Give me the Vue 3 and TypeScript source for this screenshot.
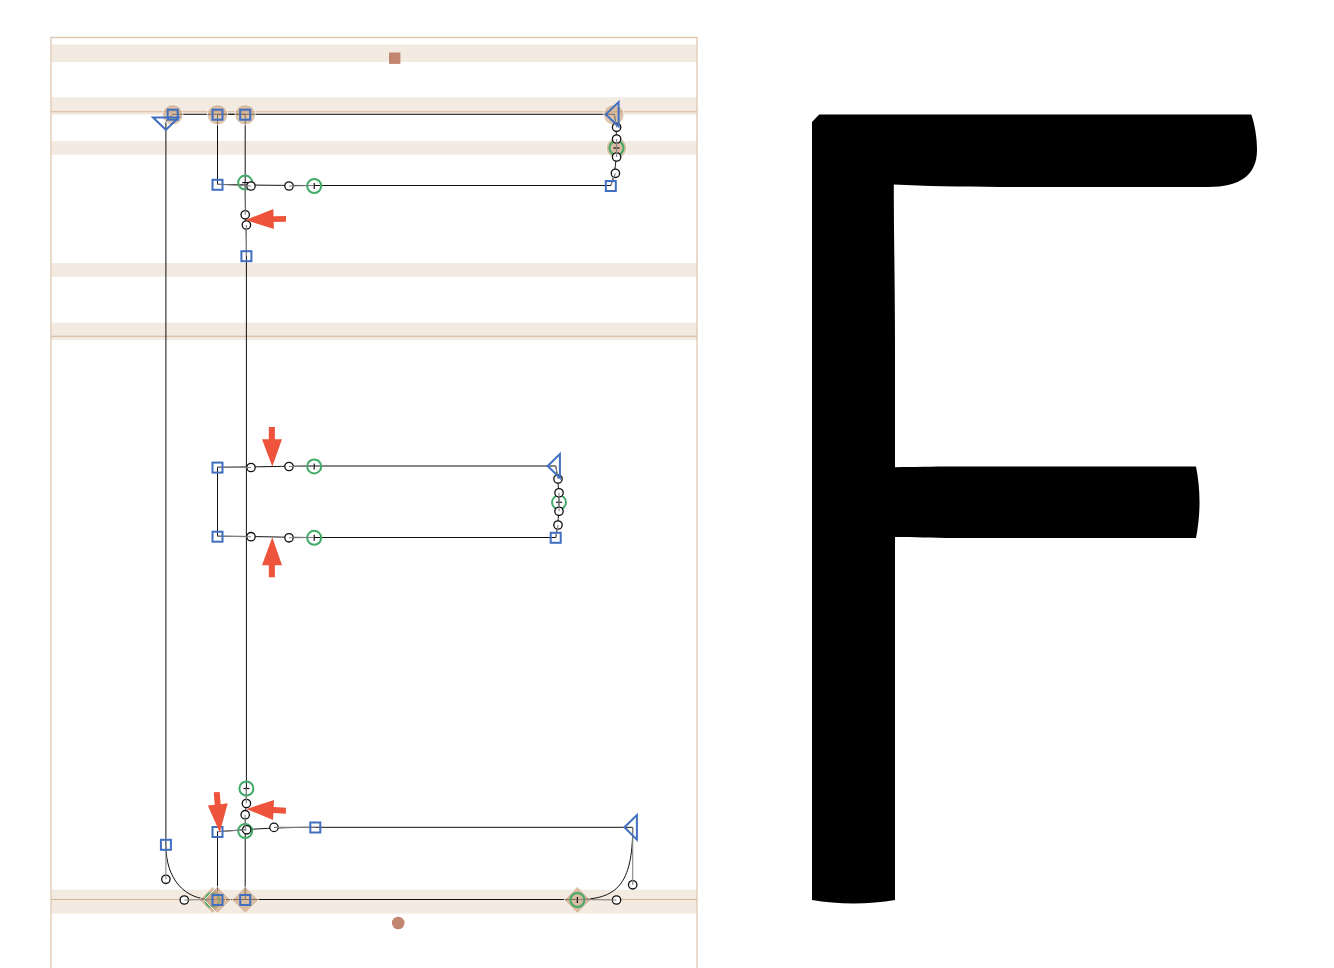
<script setup lang="ts">
type Point = [number, number]
type Segment = [number, number, number, number]
interface Extremum {
  x: number
  y: number
  tick: 'h' | 'v'
}

const zones: Point[] = [
  [44.5, 17.5],
  [97.3, 17.4],
  [141, 13.7],
  [263, 13.7],
  [322.6, 17.4],
  [889.8, 23.8],
]

const metrics: number[] = [111.8, 336.2, 899.5]

const contours: string[] = [
  'M172.7 114.3H245.2V183C245.3 215 246.4 225 246.4 256V788.5C246.4 803.5 245.2 814.7 245.2 831V899.5H212C184.3 899.5 165.9 879 165.9 845V121.5Z',
  'M217.5 114.3H614.5C616.5 127 616.5 139 616.5 148C616.5 157 615.4 173.5 610.8 185.5H314C289 185.5 251 185.2 217.5 184.3Z',
  'M217.5 467.2C251 467.2 289 466 314 466H555.8C558 479 559 492.5 559 502C559 511 558 525 555.8 537.5H314C289 537.5 251 536.2 217.5 536.2Z',
  'M217.5 831.7C246.5 829.5 274 827.3 315.3 827.3H632.7C632.7 884.7 616.5 899.5 577.3 899.5H217.5Z',
]

const roundAnchors: Point[] = [
  [172.7, 114.7],
  [217.5, 114.7],
  [245.2, 114.7],
  [613.8, 114.7],
  [616.5, 148],
]

const coveredAnchor: Point = [212.5, 900]

const diamondAnchors: Point[] = [
  [217.5, 900],
  [245.2, 900],
  [577.4, 900],
]

const handles: Segment[] = [
  [217.5, 184.3, 251, 186],
  [314, 185.5, 289, 186],
  [245.2, 183, 245.2, 214.8],
  [246.4, 256, 246.4, 225],
  [614, 114.3, 616.6, 127.3],
  [616.5, 148, 616.6, 139],
  [616.5, 148, 616.6, 157],
  [610.8, 185.5, 615.4, 173.3],
  [217.5, 467.2, 251, 467.5],
  [314, 466, 289, 466.5],
  [217.5, 536.2, 251, 536.7],
  [314, 537.5, 289, 537.8],
  [555.8, 466, 558, 479],
  [559, 502, 559, 492.8],
  [559, 502, 559, 511.3],
  [555.8, 537.5, 558, 525],
  [246.4, 788.5, 246.4, 803.5],
  [245.2, 831, 245.2, 814.7],
  [217.5, 831.7, 246.7, 829.8],
  [315.3, 827.3, 274, 827.4],
  [165.9, 845, 165.9, 879.3],
  [212.5, 899.5, 184.3, 900],
  [632.7, 827.3, 632.7, 884.8],
  [577.4, 899.5, 616.5, 900],
]

const extrema: Extremum[] = [
  { x: 245.2, y: 182.6, tick: 'h' },
  { x: 314.2, y: 186, tick: 'v' },
  { x: 616.5, y: 148, tick: 'h' },
  { x: 314.2, y: 466.4, tick: 'v' },
  { x: 314.2, y: 537.8, tick: 'v' },
  { x: 559, y: 502.3, tick: 'h' },
  { x: 246.4, y: 788.5, tick: 'h' },
  { x: 245.2, y: 831, tick: 'h' },
  { x: 577.4, y: 900, tick: 'v' },
]

const corners: Point[] = [
  [172.7, 114.7],
  [217.5, 114.7],
  [245.2, 114.7],
  [217.5, 184.8],
  [246.4, 256.2],
  [610.8, 186],
  [217.5, 467.6],
  [217.5, 536.7],
  [555.7, 537.8],
  [217.5, 832],
  [315.3, 827.5],
  [165.9, 844.8],
  [217.5, 900],
  [245.2, 900],
]

const startMarks: string[] = [
  '153,117.6 178.6,117.6 165.9,129.8',
  '605.8,114.4 618.6,102 618.6,126.4',
  '547.6,466 559.9,454 559.9,478',
  '624.4,827.2 636.9,815 636.9,839.6',
]

const arrows: string[] = [
  '245.5,220 273.4,209 273.5,216.2 286,215.9 286,221.8 273.7,222.1 273.9,229',
  '272.3,466.5 262,439.2 268.8,439.2 268.8,427 274.9,427 274.9,439.2 282,439.2',
  '272.3,537.2 262,565.2 268.8,565.2 268.8,577.2 274.9,577.2 274.9,565.2 282,565.2',
  '219.8,832.5 207.8,805.5 214.7,804.8 213.7,792.3 219.7,791.9 220.7,804.2 227.7,803.3',
  '246.5,809 274,800 273.7,807 286,807.7 285.8,813.8 273.4,813 273,820',
]

const diamondPoints = ([x, y]: Point): string =>
  `${x},${y - 13.5} ${x + 13.5},${y} ${x},${y + 13.5} ${x - 13.5},${y}`
</script>

<template>
  <main class="sheet">
    <svg class="outline" viewBox="0 0 760 968" role="img" aria-label="Glyph outline with control points">
      <rect v-for="[y, h] in zones" :key="y" class="zone" x="51" :y="y" width="646" :height="h" />
      <path class="frame" d="M51 968V37.5H697V968" />
      <path v-for="y in metrics" :key="y" class="metric" :d="`M51 ${y}H697`" />

      <path v-for="(d, i) in contours" :key="i" class="contour" :d="d" />

      <polygon class="anchor" :points="diamondPoints(coveredAnchor)" />
      <circle class="extremum" :cx="coveredAnchor[0]" :cy="coveredAnchor[1]" r="7" />
      <circle v-for="([x, y], i) in roundAnchors" :key="i" class="anchor" :cx="x" :cy="y" r="10.2" />
      <polygon v-for="(p, i) in diamondAnchors" :key="i" class="anchor" :points="diamondPoints(p)" />

      <g v-for="(e, i) in extrema" :key="i">
        <circle class="extremum" :cx="e.x" :cy="e.y" r="7" />
        <path class="tick" :d="e.tick === 'v' ? `M${e.x} ${e.y - 3}v6` : `M${e.x - 3} ${e.y}h6`" />
      </g>

      <circle v-for="([, , x, y], i) in handles" :key="i" class="knob" :cx="x" :cy="y" r="4.2" />
      <path v-for="([x1, y1, x2, y2], i) in handles" :key="i" class="handle" :d="`M${x1} ${y1}L${x2} ${y2}`" />

      <rect v-for="([x, y], i) in corners" :key="i" class="corner" :x="x - 5" :y="y - 5" width="10" height="10" />
      <polygon v-for="(points, i) in startMarks" :key="i" class="corner" :points="points" />

      <polygon v-for="(points, i) in arrows" :key="i" class="arrow" :points="points" />

      <rect class="marker" x="389" y="52.5" width="11.4" height="11.4" />
      <circle class="marker" cx="398.2" cy="923" r="6.3" />
    </svg>

    <svg class="preview" viewBox="760 0 574 968" role="img" aria-label="Filled glyph preview">
      <path
        d="M812 122L819.2 114.5H1251.3C1255 125 1257 138 1257 150C1257 175 1240 187 1208 187H1000C960 187 925 186 893.8 184.6C893.8 230 895 290 895 350V467.2C915 467 930 466.5 955 466.5H1196C1200.7 490 1200.7 514 1196 538H955C930 538 915 537 895 537V900C870 904.5 837 904.5 812 900Z"
      />
    </svg>
  </main>
</template>

<style scoped>
.sheet {
  display: grid;
  grid-template-columns: 760fr 574fr;
  background: #fff;
}

.outline,
.preview {
  display: block;
  width: 100%;
}

.zone {
  fill: #f3eae1;
}

.frame {
  fill: none;
  stroke: #dfc8b3;
  stroke-width: 1.3;
}

.metric {
  fill: none;
  stroke: #d3b494;
  stroke-width: 1.1;
}

.contour {
  fill: none;
  stroke: #111;
  stroke-width: 1;
}

.anchor {
  fill: rgb(200 160 122 / 62%);
  stroke: rgb(255 255 255 / 75%);
  stroke-width: 1;
}

.extremum {
  fill: none;
  stroke: #41ab68;
  stroke-width: 2;
}

.tick {
  fill: none;
  stroke: #111;
  stroke-width: 1.2;
}

.knob {
  fill: #fff;
  stroke: #111;
  stroke-width: 1.3;
}

.handle {
  fill: none;
  stroke: #858585;
  stroke-width: 1.1;
}

.corner {
  fill: none;
  stroke: #416fc0;
  stroke-width: 2;
}

.arrow {
  fill: #ee543b;
}

.marker {
  fill: #c28670;
}
</style>

<style>
body {
  background: #fff;
}
</style>
